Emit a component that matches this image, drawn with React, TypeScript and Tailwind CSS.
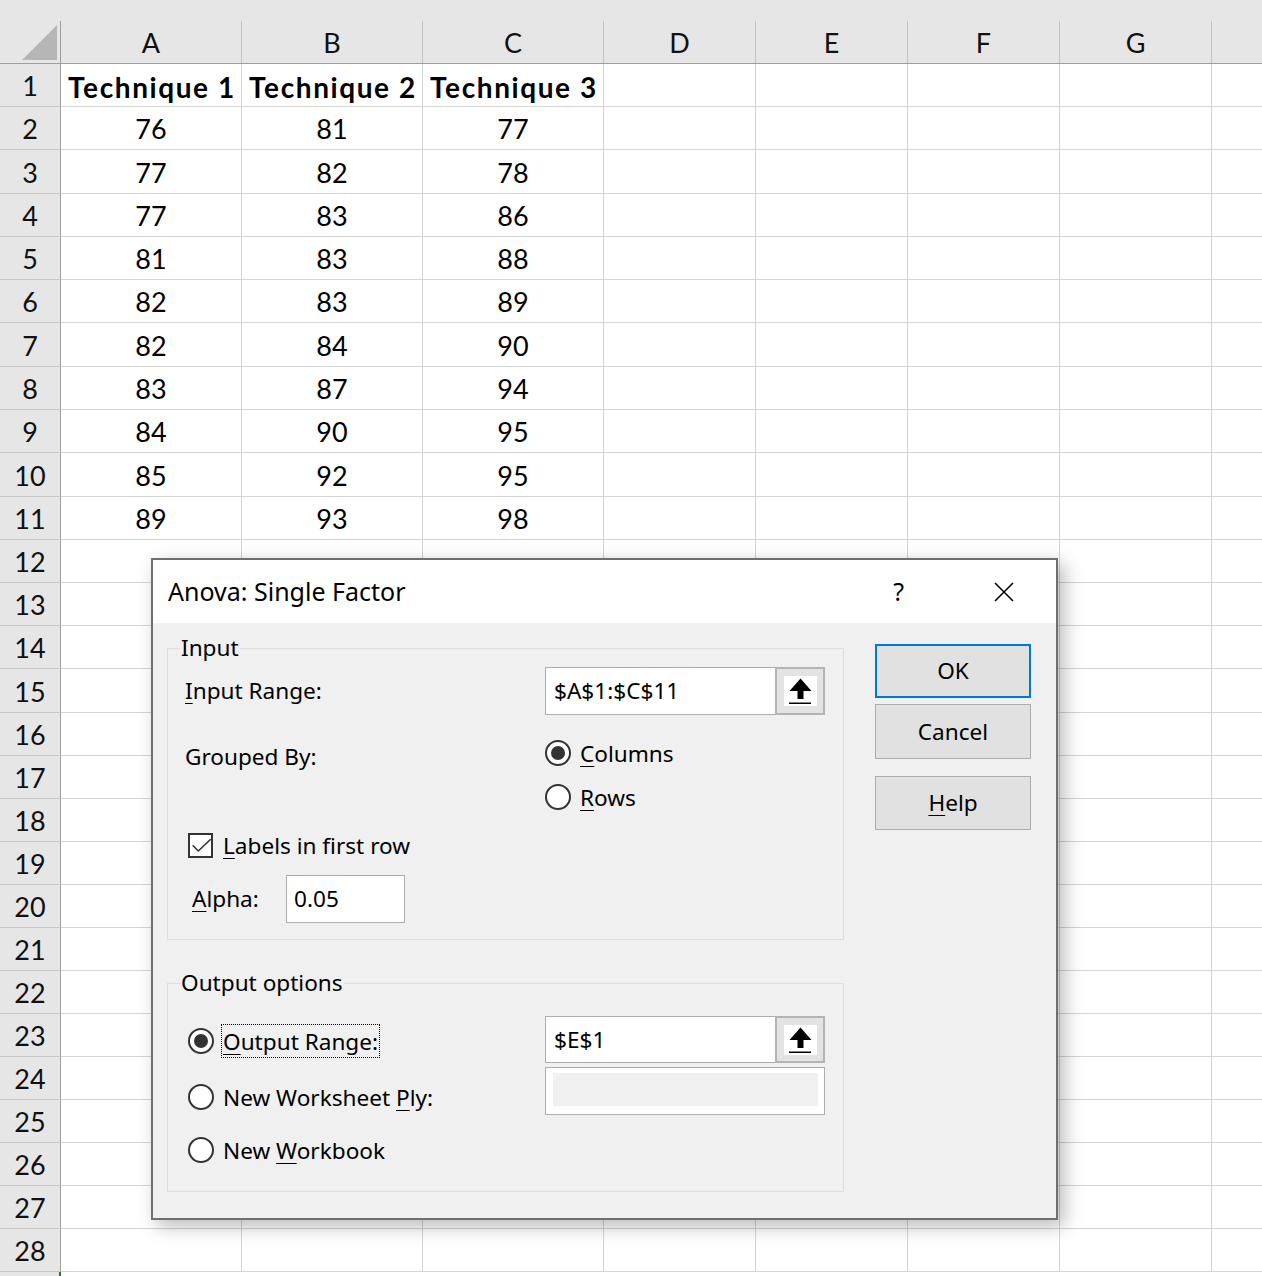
import React from "react";

const COLS = [
  { l: "A", w: "w-[181px]" },
  { l: "B", w: "w-[181px]" },
  { l: "C", w: "w-[181px]" },
  { l: "D", w: "w-[152px]" },
  { l: "E", w: "w-[152px]" },
  { l: "F", w: "w-[152px]" },
  { l: "G", w: "w-[152px]" },
];

const H43 = "h-[43px]";
const H44 = "h-[44px]";
const ROW_H = [
  H43, H43, H44, H43, H43, H43, H44, H43, H43, H44, H43, H43, H43, H43, H44,
  H43, H43, H43, H43, H43, H43, H43, H43, H43, H43, H43, H43, H43,
];

const DATA: string[][] = [
  ["Technique 1", "Technique 2", "Technique 3"],
  ["76", "81", "77"],
  ["77", "82", "78"],
  ["77", "83", "86"],
  ["81", "83", "88"],
  ["82", "83", "89"],
  ["82", "84", "90"],
  ["83", "87", "94"],
  ["84", "90", "95"],
  ["85", "92", "95"],
  ["89", "93", "98"],
];

const cellFont = { fontFamily: "Lato, 'Liberation Sans', sans-serif" };
const dlgFont = { fontFamily: "'Noto Sans', 'Open Sans', sans-serif" };

function U({ children }: { children: React.ReactNode }) {
  return <span className="underline decoration-1 underline-offset-[4px]">{children}</span>;
}

function Radio({ checked }: { checked?: boolean }) {
  return (
    <span className="flex h-[26px] w-[26px] shrink-0 items-center justify-center rounded-full border-2 border-[#333333] bg-white">
      {checked && <span className="h-[14px] w-[14px] rounded-full bg-[#333333]" />}
    </span>
  );
}

function RefButton() {
  return (
    <div className="flex h-full w-[50px] items-center justify-center border-2 border-[#b4b4b4] bg-[#e3e3e3]">
      <div className="flex h-[30px] w-[33px] items-center justify-center bg-white">
        <svg width="33" height="30" viewBox="0 0 33 30">
          <polygon points="16.5,2.5 5.5,15 13.5,15 13.5,23 19.5,23 19.5,15 27.5,15" fill="#000" />
          <rect x="5" y="26.5" width="22" height="1.5" fill="#000" />
        </svg>
      </div>
    </div>
  );
}

function Spreadsheet() {
  return (
    <div className="w-[1262px] bg-white" style={cellFont}>
      {/* column header */}
      <div className="flex h-[64px] border-b border-[#9e9e9e] bg-[#e6e6e6] pt-[21px]">
        <div className="relative h-[42px] w-[61px] shrink-0 border-r border-[#9e9e9e]">
          <svg className="absolute left-0 top-[-21px]" width="60" height="63" viewBox="0 0 60 63">
            <polygon points="22,60 57,60 57,25" fill="#b6b6b6" />
          </svg>
        </div>
        {COLS.map((c) => (
          <div
            key={c.l}
            className={`${c.w} flex h-[42px] shrink-0 items-center justify-center border-r border-[#c4c4c4] pt-[3px] text-[27px] text-[#111]`}
          >
            {c.l}
          </div>
        ))}
        <div className="h-[42px] flex-1" />
      </div>
      {/* rows */}
      {ROW_H.map((h, i) => {
        const row = DATA[i];
        return (
          <div key={i} className={`flex ${h}`}>
            <div className="flex w-[61px] shrink-0 items-center justify-center border-b border-r border-b-[#c8c8c8] border-r-[#9e9e9e] bg-[#e6e6e6] pt-[3px] text-[27px] text-[#111]">
              {i + 1}
            </div>
            {COLS.map((c, j) => (
              <div
                key={c.l}
                className={`${c.w} flex shrink-0 items-center justify-center border-b border-r border-[#d4d4d4] pt-[3px] text-black ${
                  i === 0 ? "pl-[2px] text-[28px] font-bold tracking-[1.6px]" : "text-[27px]"
                }`}
              >
                {row && j < 3 ? row[j] : ""}
              </div>
            ))}
            <div className="flex-1 border-b border-[#d4d4d4]" />
          </div>
        );
      })}
      <div className="flex h-[5px]">
        <div className="w-[59px] bg-[#e6e6e6]" />
        <div className="w-[2px] bg-[#217346]" />
        <div className="flex-1 bg-white" />
      </div>
    </div>
  );
}

function Dialog() {
  return (
    <div
      className="absolute left-[151px] top-[558px] flex h-[662px] w-[907px] flex-col border-2 border-[#6f6f6f] bg-[#f0f0f0] text-[22.6px] text-black shadow-[6px_6px_18px_rgba(0,0,0,0.28)]"
      style={dlgFont}
    >
      {/* title bar */}
      <div className="flex h-[63px] shrink-0 items-center bg-white pl-[15px]">
        <span className="pt-[1px] text-[25px]">Anova: Single Factor</span>
        <span className="ml-auto mr-[90px] text-[25px]">?</span>
        <svg className="mr-[42px]" width="20" height="20" viewBox="0 0 20 20">
          <path d="M1 1 L19 19 M19 1 L1 19" stroke="#000" strokeWidth="1.6" />
        </svg>
      </div>
      {/* body */}
      <div className="flex flex-1 pl-[14px]">
        <div className="w-[677px] shrink-0 pt-[25px]">
          {/* Input group */}
          <div className="relative h-[292px] border border-[#dcdcdc]">
            <span className="absolute left-[12px] top-[-16px] bg-[#f0f0f0] px-[1px] leading-[30px]">Input</span>
            <div className="pt-[18px]">
              <div className="flex h-[48px] items-center">
                <div className="w-[377px] pl-[17px]">
                  <U>I</U>nput Range:
                </div>
                <div className="flex h-[48px] w-[280px]">
                  <div className="flex flex-1 items-center border-y border-l border-[#adadad] bg-white pl-[8px]">
                    $A$1:$C$11
                  </div>
                  <RefButton />
                </div>
              </div>
              <div className="mt-[16px] flex">
                <div className="w-[377px] pl-[17px] pt-[11px] leading-[30px]">Grouped By:</div>
                <div className="flex flex-col">
                  <div className="flex h-[44px] items-center gap-[9px]">
                    <Radio checked />
                    <span className="pt-[2px]">
                      <U>C</U>olumns
                    </span>
                  </div>
                  <div className="flex h-[44px] items-center gap-[9px]">
                    <Radio />
                    <span className="pt-[2px]">
                      <U>R</U>ows
                    </span>
                  </div>
                </div>
              </div>
              <div className="mt-[4px] flex h-[44px] items-center pl-[20px]">
                <span className="flex h-[25px] w-[25px] items-center justify-center border-2 border-[#333333] bg-white">
                  <svg width="21" height="21" viewBox="0 0 21 21">
                    <path d="M2.7 10.3 L8.3 16 L20.7 4.3" fill="none" stroke="#333" strokeWidth="1.6" />
                  </svg>
                </span>
                <span className="ml-[10px] pt-[2px]">
                  <U>L</U>abels in first row
                </span>
              </div>
              <div className="mt-[8px] flex h-[48px] items-center">
                <div className="w-[118px] pl-[24px]">
                  <U>A</U>lpha:
                </div>
                <div className="flex h-[48px] w-[119px] items-center border border-[#adadad] bg-white pl-[7px]">
                  0.05
                </div>
              </div>
            </div>
          </div>
          {/* Output group */}
          <div className="relative mt-[43px] flex h-[209px] border border-[#dcdcdc]">
            <span className="absolute left-[12px] top-[-16px] bg-[#f0f0f0] px-[1px] leading-[30px]">Output options</span>
            <div className="w-[377px] pl-[20px] pt-[40px]">
              <div className="flex h-[34px] items-center">
                <Radio checked />
                <span className="ml-[7px] flex h-[34px] items-center border border-dotted border-black px-[1px] pt-[1px]">
                  <U>O</U>utput Range:
                </span>
              </div>
              <div className="mt-[22px] flex h-[34px] items-center">
                <Radio />
                <span className="ml-[9px] pt-[1px]">
                  New Worksheet <U>P</U>ly:
                </span>
              </div>
              <div className="mt-[19px] flex h-[34px] items-center">
                <Radio />
                <span className="ml-[9px] pt-[1px]">
                  New <U>W</U>orkbook
                </span>
              </div>
            </div>
            <div className="w-[280px] pt-[32px]">
              <div className="flex h-[47px]">
                <div className="flex flex-1 items-center border-y border-l border-[#adadad] bg-white pl-[8px]">$E$1</div>
                <RefButton />
              </div>
              <div className="mt-[4px] h-[48px] border border-[#adadad] bg-white pl-[7px] pt-[5px]">
                <div className="h-[33px] w-[265px] bg-[#f0f0f0]" />
              </div>
            </div>
          </div>
        </div>
        {/* buttons */}
        <div className="ml-[31px] flex w-[156px] flex-col pt-[21px]">
          <div className="flex h-[54px] items-center justify-center border-2 border-[#0078d7] bg-[#e1e1e1]">OK</div>
          <div className="mt-[6px] flex h-[55px] items-center justify-center border border-[#adadad] bg-[#e1e1e1]">
            Cancel
          </div>
          <div className="mt-[17px] flex h-[54px] items-center justify-center border border-[#adadad] bg-[#e1e1e1]">
            <span>
              <U>H</U>elp
            </span>
          </div>
        </div>
      </div>
    </div>
  );
}

export default function App() {
  return (
    <div className="relative h-[1276px] w-[1262px] overflow-hidden bg-white">
      <Spreadsheet />
      <Dialog />
    </div>
  );
}
